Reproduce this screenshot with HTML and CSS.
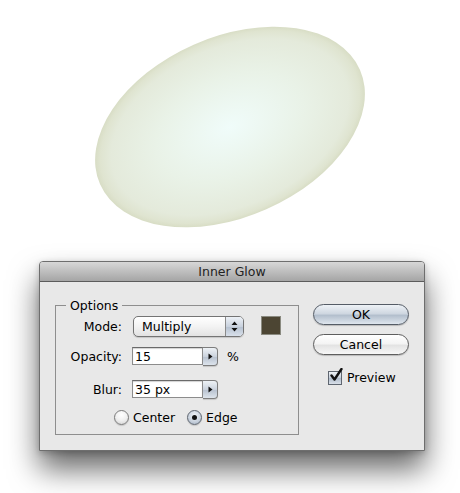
FILE: index.html
```html
<!DOCTYPE html>
<html>
<head>
<meta charset="utf-8">
<link rel="stylesheet" href="styles.css">
</head>
<body>
<div class="canvas">
  <svg class="art" width="460" height="261" viewBox="0 0 460 261">
    <defs>
      <radialGradient id="glow" cx="0.5" cy="0.5" r="0.5">
        <stop offset="0" stop-color="#f0fcfa"/>
        <stop offset="0.55" stop-color="#e9f2e7"/>
        <stop offset="0.88" stop-color="#e4eadb"/>
        <stop offset="0.96" stop-color="#dfe4d0"/>
        <stop offset="1" stop-color="#d8ddc5"/>
      </radialGradient>
    </defs>
    <ellipse cx="230" cy="127" rx="142" ry="90" fill="url(#glow)" transform="rotate(-23.8 230 127)"/>
  </svg>
</div>
<div class="dialog">
  <div class="titlebar">Inner Glow</div>
  <div class="dbody">
    <fieldset class="options">
      <legend>Options</legend>
      <div class="row row-mode">
        <span class="label">Mode:</span>
        <div class="select">
          <span class="select-text">Multiply</span>
          <span class="stepper">
            <svg width="7" height="11" viewBox="0 0 7 11"><path d="M3.5 0.5 L6.5 4 L0.5 4 Z M0.5 7 L6.5 7 L3.5 10.5 Z" fill="#111"/></svg>
          </span>
        </div>
        <span class="swatch"></span>
      </div>
      <div class="row row-opacity">
        <span class="label">Opacity:</span>
        <div class="combo">
          <span class="field">15</span>
          <span class="arrowbtn"><svg width="5" height="7" viewBox="0 0 5 7"><path d="M0.5 0.5 L4.5 3.5 L0.5 6.5 Z" fill="#111"/></svg></span>
        </div>
        <span class="unit">%</span>
      </div>
      <div class="row row-blur">
        <span class="label">Blur:</span>
        <div class="combo">
          <span class="field">35 px</span>
          <span class="arrowbtn"><svg width="5" height="7" viewBox="0 0 5 7"><path d="M0.5 0.5 L4.5 3.5 L0.5 6.5 Z" fill="#111"/></svg></span>
        </div>
      </div>
      <div class="radios">
        <span class="radio"><span class="dot"></span>Center</span>
        <span class="radio on"><span class="dot"></span>Edge</span>
      </div>
    </fieldset>
    <div class="side">
      <div class="btn btn-ok">OK</div>
      <div class="btn btn-cancel">Cancel</div>
      <div class="check">
        <span class="box"><svg width="14" height="15" viewBox="0 0 14 15"><path d="M2.5 7.5 L5.5 11.5 L12.5 1" fill="none" stroke="#111" stroke-width="2.4" stroke-linecap="round" stroke-linejoin="round"/></svg></span>
        Preview
      </div>
    </div>
  </div>
</div>
</body>
</html>
```

FILE: styles.css
```css
html, body {
  margin: 0;
  padding: 0;
  background: #ffffff;
}
body {
  width: 460px;
  height: 493px;
  overflow: hidden;
  font-family: "DejaVu Sans", "Liberation Sans", sans-serif;
  font-size: 12.5px;
  color: #000;
}
.canvas {
  height: 261px;
}
.art {
  display: block;
}
.dialog {
  margin-left: 39px;
  width: 384px;
  border: 1px solid #6e6e6e;
  border-radius: 4px 4px 0 0;
  background: #e8e8e8;
  box-shadow: 0 18px 30px rgba(0, 0, 0, 0.6), 0 2px 6px rgba(0, 0, 0, 0.2);
}
.titlebar {
  height: 19px;
  line-height: 19px;
  text-align: center;
  background: linear-gradient(#d7d7d7, #b9b9b9 60%, #a5a5a5);
  border-bottom: 1px solid #5c5c5c;
  border-radius: 3px 3px 0 0;
  color: #222;
}
.dbody {
  display: flex;
  align-items: flex-start;
  padding: 0 0 15px 15px;
}
.options {
  margin: 16px 0 0 0;
  padding: 3px 0 9px 0;
  width: 242px;
  border: 1px solid #8e8e8e;
  min-inline-size: 0;
}
.options legend {
  margin-left: 10px;
  padding: 0 4px;
  line-height: 15px;
}
.row {
  display: flex;
  align-items: center;
}
.label {
  width: 66px;
  text-align: right;
  margin-right: 10px;
  flex: none;
}
.row-mode {
  height: 21px;
}
.row-opacity {
  height: 18px;
  margin-top: 10px;
}
.row-blur {
  height: 18px;
  margin-top: 15px;
}
.select {
  margin-left: 1px;
  width: 109px;
  height: 19px;
  border: 1px solid #747474;
  border-radius: 5px;
  display: flex;
  background: linear-gradient(#ffffff, #f3f3f3 50%, #e2e2e2);
  overflow: hidden;
  box-shadow: 0 1px 1px rgba(0,0,0,0.15);
}
.select-text {
  flex: 1;
  padding-left: 8px;
  line-height: 19px;
}
.stepper {
  width: 17px;
  border-left: 1px solid #8a8a8a;
  background: linear-gradient(#edf1f6, #c9d2de 50%, #b5c0cf 51%, #d8e0ea);
  display: flex;
  align-items: center;
  justify-content: center;
}
.stepper svg {
  display: block;
}
.swatch {
  margin-left: 17px;
  width: 18px;
  height: 17px;
  background: #4c4533;
  border: 1px solid #8a8a80;
  margin-top: -3px;
}
.combo {
  display: flex;
  height: 18px;
}
.field {
  width: 67px;
  height: 16px;
  border: 1px solid #8c8c8c;
  border-top-color: #6a6a6a;
  background: #fff;
  padding-left: 2px;
  line-height: 17px;
  box-shadow: inset 0 1px 1px rgba(0,0,0,0.18);
}
.arrowbtn {
  width: 14px;
  height: 17px;
  border: 1px solid #7d7d7d;
  border-left: none;
  border-radius: 0 4px 4px 0;
  background: linear-gradient(#eef2f6, #cbd3de 50%, #b7c1cf 52%, #dde4ec);
  display: flex;
  align-items: center;
  justify-content: center;
  box-shadow: 0 1px 1px rgba(0,0,0,0.15);
}
.arrowbtn svg {
  display: block;
}
.unit {
  margin-left: 9px;
}
.radios {
  display: flex;
  justify-content: flex-start;
  padding-left: 58px;
  margin-top: 12px;
  height: 15px;
  align-items: center;
}
.radio {
  display: flex;
  align-items: center;
  margin-right: 12px;
}
.radio .dot {
  width: 13px;
  height: 13px;
  border: 1px solid #7a7a7a;
  border-radius: 50%;
  background: radial-gradient(circle at 50% 30%, #ffffff, #f0f0f0 50%, #cfcfcf);
  margin-right: 4px;
  display: flex;
  align-items: center;
  justify-content: center;
  box-shadow: 0 1px 1px rgba(0,0,0,0.15);
}
.radio.on .dot {
  background: radial-gradient(circle at 50% 35%, #f1f4f8, #c7d0dc 60%, #9eabbc);
  border-color: #5f6670;
}
.radio.on .dot::after {
  content: "";
  width: 5px;
  height: 5px;
  border-radius: 50%;
  background: #111;
}
.side {
  margin-left: 14px;
  margin-top: 22px;
  width: 96px;
  display: flex;
  flex-direction: column;
}
.btn {
  box-sizing: border-box;
  height: 21px;
  border-radius: 11px;
  text-align: center;
  line-height: 19px;
  box-shadow: 0 1px 1px rgba(0,0,0,0.2);
}
.btn-ok {
  border: 1px solid #555c66;
  background: linear-gradient(#eef2f6, #cfd7e1 45%, #b3bfcd 55%, #dfe6ee);
}
.btn-cancel {
  margin-top: 9px;
  border: 1px solid #5e5e5e;
  background: linear-gradient(#ffffff, #f4f4f4 45%, #e3e3e3 55%, #f7f7f7);
}
.check {
  display: flex;
  align-items: center;
  margin-top: 15px;
  padding-left: 15px;
}
.check .box {
  position: relative;
  width: 12px;
  height: 12px;
  border: 1px solid #5f6670;
  background: linear-gradient(#eef2f6, #c6cfdb 50%, #b0bccb 52%, #d9e0e9);
  margin-right: 5px;
}
.check .box svg {
  position: absolute;
  left: 0;
  top: -4px;
}
```
